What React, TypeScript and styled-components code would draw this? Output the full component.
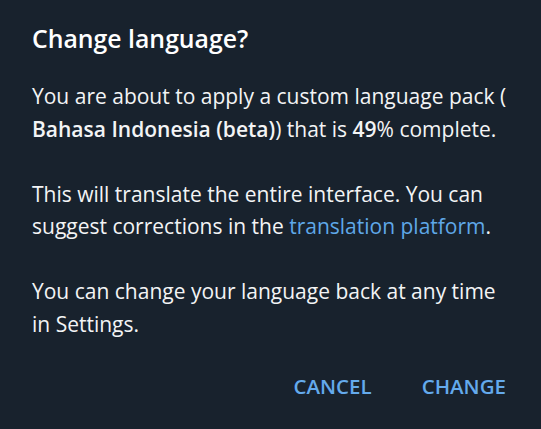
import React from "react";
import styled, { createGlobalStyle } from "styled-components";

const GlobalStyle = createGlobalStyle`
  html, body {
    margin: 0;
    padding: 0;
    background: #18222d;
  }
  body {
    font-family: "Open Sans", "Noto Sans", sans-serif;
    -webkit-font-smoothing: antialiased;
  }
`;

const Dialog = styled.div`
  width: 541px;
  height: 429px;
  box-sizing: border-box;
  background: #18222d;
  color: #f3f4f5;
  padding: 22px 29px 0 32px;
  display: flex;
  flex-direction: column;
`;

const Title = styled.h1`
  margin: 0 0 26px 0;
  font-size: 24.8px;
  font-weight: 600;
  line-height: 32px;
  color: #ffffff;
`;

const Body = styled.div`
  display: flex;
  flex-direction: column;
  gap: 32.5px;
`;

const Paragraph = styled.p`
  margin: 0;
  font-size: 21px;
  line-height: 32.5px;
  font-weight: 400;
`;

const Strong = styled.b`
  font-weight: 600;
`;

const Link = styled.a`
  color: #5fa8e8;
  text-decoration: none;
  cursor: pointer;
`;

const Actions = styled.div`
  display: flex;
  justify-content: flex-end;
  gap: 50px;
  margin-top: 31px;
  padding-right: 6px;
`;

const FlatButton = styled.button`
  background: none;
  border: none;
  padding: 0;
  font-family: inherit;
  font-size: 20.5px;
  font-weight: 600;
  line-height: 30px;
  color: #64aaec;
  text-transform: uppercase;
  cursor: pointer;
`;

export default function App() {
  return (
    <>
      <GlobalStyle />
      <Dialog>
        <Title>Change language?</Title>
        <Body>
          <Paragraph>
            You are about to apply a custom language pack (
            <br />
            <Strong>Bahasa Indonesia (beta)</Strong>) that is{" "}
            <Strong>49</Strong>% complete.
          </Paragraph>
          <Paragraph>
            This will translate the entire interface. You can suggest
            corrections in the <Link>translation platform</Link>.
          </Paragraph>
          <Paragraph>
            You can change your language back at any time in Settings.
          </Paragraph>
        </Body>
        <Actions>
          <FlatButton>Cancel</FlatButton>
          <FlatButton>Change</FlatButton>
        </Actions>
      </Dialog>
    </>
  );
}
